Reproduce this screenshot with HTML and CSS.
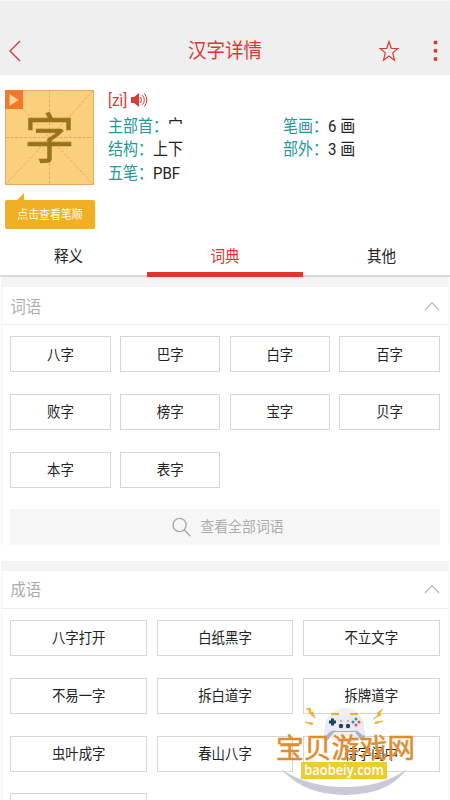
FILE: index.html
```html
<!DOCTYPE html>
<html lang="zh-CN">
<head>
<meta charset="utf-8">
<title>汉字详情</title>
<link rel="stylesheet" href="styles.css">
</head>
<body>
<div class="app">
  <header class="bar">
    <svg class="back" width="14" height="24" viewBox="0 0 14 24"><path d="M12 2 2 12 12 22"/></svg>
    <h1 class="t">汉字详情</h1>
    <svg class="star" width="22" height="24" viewBox="0 0 22 24"><path d="M11 2.5 13.3 9.3 19.8 9.5 14.7 13.9 16.5 21.2 11 17 5.5 21.2 7.3 13.9 2.2 9.5 8.7 9.3Z"/></svg>
    <svg class="more" width="5" height="22" viewBox="0 0 5 22"><path d="M1 1h3v3H1zM1 9.3h3v3H1zM1 17.6h3v3H1z"/></svg>
  </header>

  <section class="info">
    <div class="left">
      <div class="tile">
        <svg class="guides" width="89" height="95" viewBox="0 0 89 95"><path d="M1 1 88 94M88 1 1 94M44.5 1V94M1 47.5H88"/></svg>
        <span class="big">字</span>
        <svg class="play" width="18" height="19" viewBox="0 0 18 19"><path class="play-bg" d="M0 0h18v19H0z"/><path class="play-fg" d="M4.500 4 13.500 10 4.500 16Z"/></svg>
      </div>
      <div class="tip"><span class="t">点击查看笔顺</span></div>
    </div>
    <div class="facts">
      <div class="pinyin"><span class="t">[zì]</span>
        <svg width="17" height="16" viewBox="0 0 17 16"><path class="cone" d="M0 5h3l5-4v14l-5-4H0z"/><path class="wave" d="M9.5 5q2 3 0 6M11.5 3.2q3.6 4.8 0 9.6M13.5 1.5q4.6 6.5 0 13"/></svg>
      </div>
      <div class="row"><p class="t"><b>主部首：</b>宀</p><p class="t"><b>笔画：</b>6 画</p></div>
      <div class="row"><p class="t"><b>结构：</b>上下</p><p class="t"><b>部外：</b>3 画</p></div>
      <div class="row"><p class="t"><b>五笔：</b>PBF</p></div>
    </div>
  </section>

  <nav class="tabs">
    <div class="tab"><span class="t">释义</span></div>
    <div class="tab active"><span class="t">词典</span></div>
    <div class="tab"><span class="t">其他</span></div>
  </nav>

  <section class="group">
    <h2><span class="t">词语</span><svg width="16" height="10" viewBox="0 0 16 10"><path d="M1 9 8 1.5 15 9"/></svg></h2>
    <div class="grid four">
      <div class="word"><span class="t">八字</span></div><div class="word"><span class="t">巴字</span></div>
      <div class="word"><span class="t">白字</span></div><div class="word"><span class="t">百字</span></div>
      <div class="word"><span class="t">败字</span></div><div class="word"><span class="t">榜字</span></div>
      <div class="word"><span class="t">宝字</span></div><div class="word"><span class="t">贝字</span></div>
      <div class="word"><span class="t">本字</span></div><div class="word"><span class="t">表字</span></div>
    </div>
    <div class="all">
      <svg width="19" height="20" viewBox="0 0 19 20"><circle cx="7.6" cy="8" r="6.6"/><path d="m12.3 12.9 6 6.3"/></svg>
      <span class="t">查看全部词语</span>
    </div>
  </section>

  <section class="group">
    <h2><span class="t">成语</span><svg width="16" height="10" viewBox="0 0 16 10"><path d="M1 9 8 1.5 15 9"/></svg></h2>
    <div class="grid three">
      <div class="word"><span class="t">八字打开</span></div><div class="word"><span class="t">白纸黑字</span></div><div class="word"><span class="t">不立文字</span></div>
      <div class="word"><span class="t">不易一字</span></div><div class="word"><span class="t">拆白道字</span></div><div class="word"><span class="t">拆牌道字</span></div>
      <div class="word"><span class="t">虫叶成字</span></div><div class="word"><span class="t">春山八字</span></div><div class="word"><span class="t">待字闺中</span></div>
      <div class="word"></div>
    </div>
  </section>

  <aside class="mark">
    <svg class="pad" width="140" height="90" viewBox="0 0 140 90">
      <circle cx="69" cy="20" r="18" fill="#efefef"/>
      <path d="M5 63Q32 81 69 81 106 81 131 63 112 89 69 89 28 89 5 63Z" fill="#c9cad8"/>
      <path d="M50 17 48 31Q48 37 52 34L58 26H79L84 33Q89 37 89 31L87 16Z" fill="#adb0c3"/>
      <path d="M57 9Q62 8 64 10H73Q76 8 80 9 86 10 87 16L89 27Q88 32 85 28 81 23 76 25H61Q55 23 51 29 48 32 48 26L50 15Q51 10 57 9Z" fill="#eaebf5"/>
      <path d="M55 8h8M74 8h8" stroke="#e8b02e" stroke-width="2"/>
      <path d="M53 16h7M56.500 12.500v7" stroke="#1e4354" stroke-width="3"/>
      <g fill="#1e4354"><circle cx="65" cy="20" r="2.200"/><circle cx="72" cy="20" r="2.200"/></g>
      <g fill="#e84c55"><circle cx="80" cy="19" r="1.500"/><circle cx="83" cy="16" r="1.500"/><circle cx="65" cy="15" r=".8"/><circle cx="72" cy="15" r=".8"/></g>
      <g fill="#239a9a"><circle cx="80" cy="13" r="1.500"/><circle cx="77" cy="16" r="1.500"/></g>
      <path d="m30 13 3 1 0 3 6 5-2-6-2 0-1-4ZM29 26l8 1-1 2ZM107 13l-6 4 1 2-5 4 8-4-1-2ZM107 25l-8 1 0 2Z" transform="translate(0 -10)" fill="#edb23b" stroke="#edb23b" stroke-width=".8"/>
    </svg>
    <div class="brand">宝贝游戏网</div>
    <div class="site"><span>baobeiy.com</span></div>
  </aside>
</div>
</body>
</html>
```

FILE: styles.css
```css
* { box-sizing: border-box; margin: 0; padding: 0; }
body {
  width: 450px; height: 800px; overflow: hidden; background: #fff;
  font-family: Roboto, "Noto Sans CJK SC", sans-serif; color: #222;
}
.app { position: relative; height: 800px; overflow: hidden; }
.t { display: inline-block; transform: scaleY(1.1); white-space: nowrap; }
svg { display: block; fill: none; flex: none; }

.bar {
  height: 75px; padding: 26px 12px 0 8px; background: #efefef;
  border-top: 1px solid #f8f8f8;
  display: grid; grid-template-columns: 14px 1fr 22px 5px; align-items: center;
}
.bar h1 { font-size: 18.5px; line-height: 24px; font-weight: 400; color: #d93a32; justify-self: center; margin-left: 17px; }
.bar svg { stroke: #d93a32; stroke-width: 1.4; }
.bar .star { stroke-width: 1.2; margin-left: -33px; }
.bar .more { fill: #d93a32; stroke-width: .5; }

.info { display: flex; height: 161px; padding: 15px 0 0 5px; }
.left { width: 103px; }
.tile {
  position: relative; width: 89px; height: 95px; background: #fad07d;
  border: 1px solid #eda765; display: flex; align-items: center; justify-content: center;
}
.guides { position: absolute; left: -1px; top: -1px; stroke: #e9a26a; stroke-width: .9; stroke-dasharray: 3 1.5; }
.play { position: absolute; left: -1px; top: -1px; }
.play-bg { fill: #f5782a; }
.play-fg { fill: #fbd596; }
.big { position: relative; margin-top: -5px; font: 400 50px/60px "Noto Sans CJK SC", sans-serif; color: #97741a; -webkit-text-stroke: .5px #97741a; transform: scaleY(1.08); }
.tip {
  position: relative; width: 90px; height: 29px; margin-top: 15px; border-radius: 2px;
  background: #f0af24; color: #fffbe8; font-size: 10.9px;
  display: flex; align-items: center; justify-content: center;
}
.tip .t { margin-top: -2px; }
.tip::before {
  content: ""; position: absolute; left: 11px; top: -7px;
  border-left: 8px solid transparent; border-bottom: 8px solid #f0af24;
}
.facts { flex: 1; font-size: 15px; line-height: 23.7px; }
.pinyin { display: flex; align-items: center; gap: 4px; height: 25.5px; margin-bottom: 0; color: #dc3b33; }
.pinyin .t { margin-top: -2px; }
.pinyin svg { margin-top: -5px; }
.cone { fill: #dc3b33; }
.wave { stroke: #dc3b33; stroke-width: 1; }
.row { display: grid; grid-template-columns: 175px 1fr; justify-items: start; height: 23.7px; }
.row b { font-weight: 400; color: #23979a; }

.tabs { display: grid; grid-template-columns: 147px 156px 147px; height: 41px; border-bottom: 2px solid #d8d8d8; }
.tab { display: flex; align-items: center; justify-content: center; font-size: 14.6px; }
.tab:not(.active) { padding-bottom: 3px; }
.tab:first-child { padding-right: 10px; }
.tab:last-child { padding-left: 10px; }
.tab.active { color: #df372e; border-bottom: 5px solid #e3342a; height: 40.5px; padding-top: 1px; }

.group { margin: 0 1px; border: 0 solid #f4f4f4; border-width: 10px 1px 0; }
.group h2 {
  display: flex; align-items: center; justify-content: space-between;
  height: 38px; padding: 0 8px 0 8.500px; border-bottom: 1px solid #ededed;
  font-size: 15.3px; font-weight: 400; color: #adadad;
}
.group h2 .t { margin-top: -2px; }
.group h2 svg { stroke: #b5b5b5; stroke-width: 1.1; }
.grid { display: grid; gap: 21.8px 9.4px; grid-auto-rows: 36px; padding: 11px 8.3px 0; }
.four { grid-template-columns: repeat(4, 1fr); }
.three { grid-template-columns: repeat(3, 1fr); }
.word {
  border: 1px solid #d6d6d6; display: flex; align-items: center; justify-content: center;
  font-size: 13.4px;
}
.word .t { margin-top: -3px; }
.all {
  margin: 21.4px 8.3px 16px; height: 36px; background: #f6f6f6; color: #adadad;
  display: flex; align-items: center; justify-content: center; gap: 9px; font-size: 13.9px; padding-left: 6px;
}
.all .t { margin-top: -3px; }
.all svg { stroke: #a9a9a9; stroke-width: 1.4; }

.mark { position: absolute; left: 276px; top: 706px; width: 140px; height: 94px; }
.pad { position: absolute; left: 0; top: 0; }
.brand {
  position: relative; margin: 27px 0 0 -1px; height: 29px; white-space: nowrap; text-align: center;
  font: 400 27.8px/26px "Noto Sans CJK SC", sans-serif; color: #df8d2c; -webkit-text-stroke: .5px #df8d2c;
}
.site {
  position: relative; width: 86px; height: 17px; margin: 0 0 0 25px; background: #ebcc36;
  color: #fffdf0; font: 600 12.9px/15px "Open Sans", sans-serif; text-align: center;
}
.site span { display: inline-block; transform: scaleY(1.12); }
```
